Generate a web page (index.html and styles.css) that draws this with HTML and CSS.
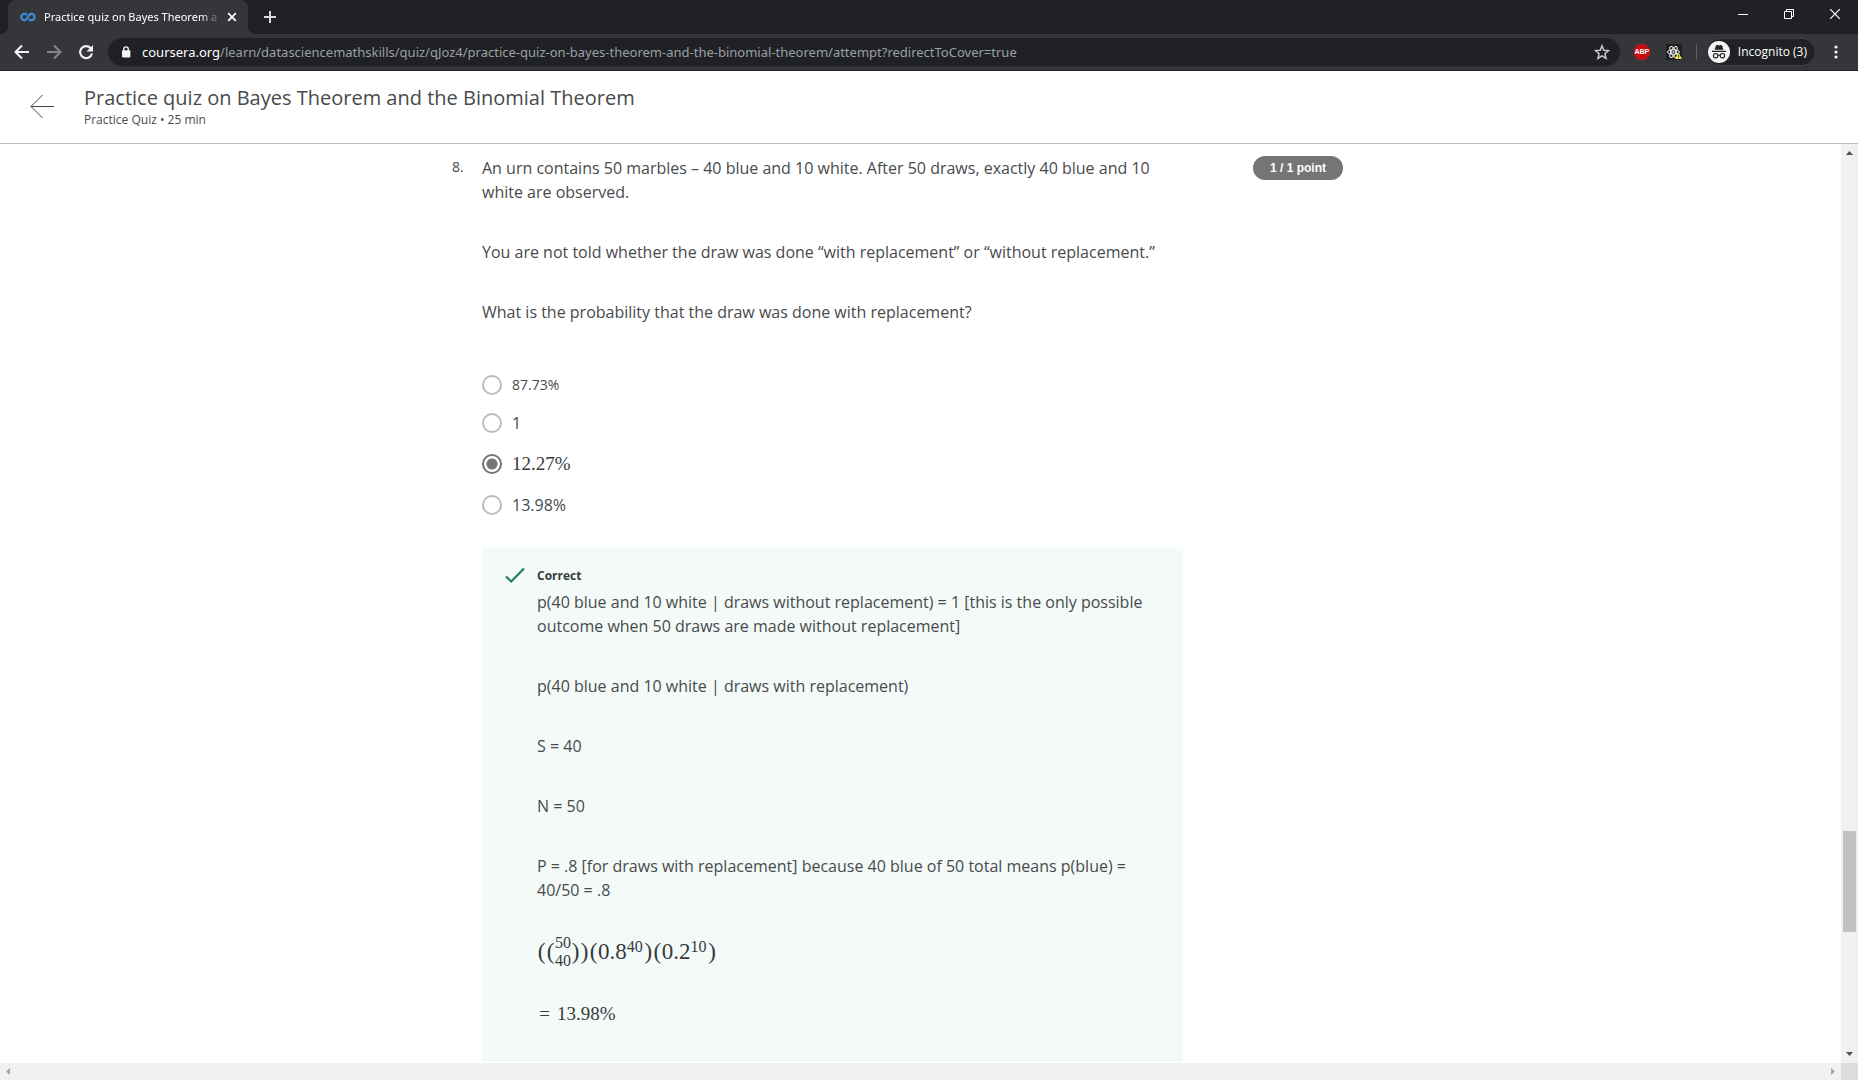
FILE: index.html
```html
<!DOCTYPE html>
<html lang="en">
<head>
<meta charset="utf-8">
<title>Practice quiz on Bayes Theorem and the Binomial Theorem</title>
<link rel="stylesheet" href="styles.css">
</head>
<body>
<div class="tabstrip">
  <div class="tab">
    <svg class="favicon" width="16" height="16" viewBox="0 0 16 16" fill="none" stroke="#3f86cc" stroke-width="2.400"><path d="M7.100 5.900C6.300 5 5.400 4.800 4.500 4.800a3.200 3.200 0 0 0 0 6.400C8 11.200 7.800 4.800 11.400 4.800a3.200 3.200 0 0 1 0 6.400c-.9 0-1.800-.4-2.500-1.200"/></svg>
    <span class="tab-title">Practice quiz on Bayes Theorem a</span>
    <button class="icon-button tab-close" aria-label="Close tab"><svg width="10" height="10" viewBox="0 0 10 10" stroke="#fff" stroke-width="1.800"><path d="M1.200 1.200l7.600 7.600M8.800 1.200L1.200 8.800"/></svg></button>
  </div>
  <button class="icon-button new-tab" aria-label="New tab"><svg width="12" height="12" viewBox="0 0 12 12" stroke="#d6d7d9" stroke-width="2"><path d="M6 0v12M0 6h12"/></svg></button>
  <div class="window-controls">
    <button class="icon-button" aria-label="Minimize"><svg width="10" height="10" viewBox="0 0 10 10" stroke="#fff"><path d="M0 5.500h10"/></svg></button>
    <button class="icon-button" aria-label="Restore"><svg width="10" height="10" viewBox="0 0 10 10" fill="none" stroke="#fff"><path d="M.5 2.500h7v7h-7zM2.500 2.500v-2h7v7h-2"/></svg></button>
    <button class="icon-button" aria-label="Close"><svg width="10" height="10" viewBox="0 0 10 10" stroke="#fff" stroke-width="1.200"><path d="M0 0l10 10M10 0L0 10"/></svg></button>
  </div>
</div>
<div class="toolbar">
  <div class="nav-buttons">
    <button class="icon-button" aria-label="Back"><svg width="16" height="16" viewBox="0 0 16 16" fill="none" stroke="#f1f3f4" stroke-width="2"><path d="M15 8H2.500M8 1.500L1.500 8 8 14.500"/></svg></button>
    <button class="icon-button" aria-label="Forward"><svg width="16" height="16" viewBox="0 0 16 16" fill="none" stroke="#85868a" stroke-width="2"><path d="M1 8h12.500M8 1.500L14.500 8 8 14.500"/></svg></button>
    <button class="icon-button" aria-label="Reload"><svg width="16" height="16" viewBox="0 0 16 16"><path d="M12.700 4.200A6 6 0 1 0 14 9.500" fill="none" stroke="#f1f3f4" stroke-width="2.100"/><path d="M15 1v6.500H8.500z" fill="#f1f3f4"/></svg></button>
  </div>
  <div class="omnibox">
    <svg width="10" height="12" viewBox="0 0 10 12"><path d="M2.700 5V3.200a2.300 2.300 0 0 1 4.600 0V5" fill="none" stroke="#f1f3f4" stroke-width="1.400"/><rect x="1" y="4.300" width="8.400" height="7.200" rx="1" fill="#f1f3f4"/></svg>
    <span class="url"><span class="domain">coursera.org</span>/learn/datasciencemathskills/quiz/qJoz4/practice-quiz-on-bayes-theorem-and-the-binomial-theorem/attempt?redirectToCover=true</span>
    <button class="icon-button" aria-label="Bookmark this page"><svg width="16" height="16" viewBox="0 0 16 16" fill="none" stroke="#c8c9cb" stroke-width="1.500"><path d="M8 1.800l1.800 4.400 4.700.4-3.600 3.100 1.100 4.600L8 11.800l-4 2.500 1.100-4.600-3.600-3.100 4.700-.4z"/></svg></button>
  </div>
  <div class="extensions">
    <button class="icon-button abp" aria-label="Adblock Plus">ABP</button>
    <button class="icon-button" aria-label="React developer tools"><svg width="16" height="16" viewBox="0 0 16 16"><path fill="#202020" d="M0 0h16v16H0z"/><g fill="none" stroke="#eee"><ellipse cx="7.500" cy="8" rx="6" ry="2.300"/><ellipse cx="7.500" cy="8" rx="6" ry="2.300" transform="rotate(60 7.500 8)"/><ellipse cx="7.500" cy="8" rx="6" ry="2.300" transform="rotate(120 7.500 8)"/></g><circle cx="7.500" cy="8" r="1" fill="#eee"/><path fill="#f5ea45" d="M12.500 8.500l3.500 6.500H9.200z"/><path stroke="#333" d="M12.600 11v2M12.600 13.600v.8"/></svg></button>
  </div>
  <div class="profile">
    <svg width="22" height="22" viewBox="0 0 22 22"><circle cx="11" cy="11" r="11" fill="#f1f3f4"/><path fill="#202124" d="M6.600 8.800L8 4.600q.4-.8 1.300-.5l1.700.5 1.700-.5q.9-.3 1.300.5l1.400 4.200zM4 9.800h14v1.200H4z"/><g fill="none" stroke="#202124" stroke-width="1.100"><circle cx="7.600" cy="14.700" r="2.200"/><circle cx="14.400" cy="14.700" r="2.200"/><path d="M9.800 14.400q1.200-.7 2.400 0"/></g></svg>
    <span>Incognito (3)</span>
  </div>
  <button class="icon-button menu" aria-label="Menu"><svg width="4" height="14" viewBox="0 0 4 14" fill="#f1f3f4"><circle cx="2" cy="2" r="1.600"/><circle cx="2" cy="7" r="1.600"/><circle cx="2" cy="12" r="1.600"/></svg></button>
</div>
<header class="quiz-header">
  <button class="icon-button" aria-label="Back to course"><svg width="24" height="24" viewBox="0 0 24 24" fill="none" stroke="#444"><path d="M24 11.500H1M12.500 0L1 11.500 12.500 23"/></svg></button>
  <div>
    <h1>Practice quiz on Bayes Theorem and the Binomial Theorem</h1>
    <p class="subtitle">Practice Quiz • 25 min</p>
  </div>
</header>
<div class="viewport">
  <main class="page">
    <section class="question">
      <div class="number">8.</div>
      <div class="body">
        <div class="prose">
          <p>An urn contains 50 marbles – 40 blue and 10 white. After 50 draws, exactly 40 blue and 10 white are observed.</p>
          <p>You are not told whether the draw was done “with replacement” or “without replacement.”</p>
          <p>What is the probability that the draw was done with replacement?</p>
        </div>
        <div class="options">
          <label class="option small"><input type="radio" name="answer"><span>87.73%</span></label>
          <label class="option"><input type="radio" name="answer"><span>1</span></label>
          <label class="option tall"><input type="radio" name="answer" checked><span class="math">12.27%</span></label>
          <label class="option"><input type="radio" name="answer"><span>13.98%</span></label>
        </div>
        <div class="feedback">
          <svg class="tick" width="20" height="18" viewBox="0 0 20 18" fill="none" stroke="#1f8354" stroke-width="2.200"><path d="M1 9.500l5.200 5L19 1.500"/></svg>
          <div>
            <h2>Correct</h2>
            <div class="prose">
              <p>p(40 blue and 10 white | draws without replacement) = 1 [this is the only possible outcome when 50 draws are made without replacement]</p>
              <p>p(40 blue and 10 white | draws with replacement)</p>
              <p>S = 40</p>
              <p>N = 50</p>
              <p>P = .8 [for draws with replacement] because 40 blue of 50 total means p(blue) = 40/50 = .8</p>
              <p class="formula"><span class="paren">(</span><span class="paren">(</span><span class="binom"><span>50</span><span>40</span></span><span class="paren">)</span><span class="paren">)</span><span class="paren">(</span>0.8<span class="power">40</span><span class="paren">)</span><span class="paren">(</span>0.2<span class="power">10</span><span class="paren">)</span></p>
              <p class="math result"><span class="equals">=</span><span>13.98%</span></p>
            </div>
          </div>
        </div>
      </div>
      <div class="points">1 / 1 point</div>
    </section>
  </main>
  <div class="scroll-y">
    <svg width="17" height="17" viewBox="0 0 17 17"><path fill="#505050" d="M5 11h7L8.500 7z"/></svg>
    <div class="before"></div><div class="thumb"></div><div class="after"></div>
    <svg width="17" height="17" viewBox="0 0 17 17"><path fill="#505050" d="M5 6h7L8.500 10z"/></svg>
  </div>
  <div class="scroll-x">
    <svg width="17" height="17" viewBox="0 0 17 17"><path fill="#a3a3a3" d="M10 5v7L6 8.500z"/></svg>
    <svg width="17" height="17" viewBox="0 0 17 17"><path fill="#a3a3a3" d="M7 5v7l4-3.500z"/></svg>
  </div>
  <div class="corner"></div>
</div>
</body>
</html>
```
FILE: styles.css
```css
* { box-sizing: border-box; }

body {
  margin: 0;
  height: 100vh;
  display: flex;
  flex-direction: column;
  overflow: hidden;
  background: #fff;
  color: #484a4c;
  font: 16px/24px "Open Sans", sans-serif;
}

h1, h2, p { margin: 0; }
svg { display: block; flex: none; }

.icon-button {
  display: flex;
  align-items: center;
  justify-content: center;
  flex: none;
  padding: 0;
  border: 0;
  background: none;
}

/* Browser window */
.tabstrip {
  display: flex;
  flex: none;
  height: 34px;
  padding-left: 8px;
  background: #202124;
}

.tab {
  position: relative;
  display: flex;
  align-items: center;
  width: 240px;
  padding: 0 11px 0 12px;
  border-radius: 8px 8px 0 0;
  background: #35363a;
  color: #fff;
  font: 11px/24px "Noto Sans", sans-serif;
}

.tab::before, .tab::after {
  content: "";
  position: absolute;
  bottom: 0;
  width: 8px;
  height: 8px;
}
.tab::before { left: -8px; background: radial-gradient(circle at 0 0, #202124 8px, #35363a 8px); }
.tab::after { right: -8px; background: radial-gradient(circle at 100% 0, #202124 8px, #35363a 8px); }

.tab-title {
  flex: 1;
  margin-left: 8px;
  white-space: nowrap;
  -webkit-mask-image: linear-gradient(to left, transparent, #000 20px);
  mask-image: linear-gradient(to left, transparent, #000 20px);
}
.tab-close { margin-left: 6px; }
.new-tab { width: 44px; }
.window-controls { display: flex; margin-left: auto; height: 28px; }
.window-controls .icon-button { width: 46px; }

.toolbar {
  display: flex;
  align-items: center;
  flex: none;
  height: 37px;
  padding: 0 14px;
  border-bottom: 1px solid #242327;
  background: #35363a;
  color: #fff;
  font-size: 12px;
}
.nav-buttons { display: flex; gap: 16px; margin-right: 14px; }

.omnibox {
  display: flex;
  align-items: center;
  flex: 1;
  min-width: 0;
  height: 28px;
  padding: 0 10px 0 13px;
  border-radius: 14px;
  background: #202124;
}
.url {
  flex: 1;
  overflow: hidden;
  margin-left: 11px;
  white-space: nowrap;
  color: #9aa0a6;
  font: 13px/24px "Noto Sans", sans-serif;
}
.domain { color: #fff; }

.extensions {
  display: flex;
  gap: 16px;
  margin: 0 9px 0 14px;
  padding-right: 14px;
  border-right: 1px solid #606165;
}
.abp {
  width: 16px;
  height: 16px;
  background: #c70d12;
  clip-path: polygon(30% 0, 70% 0, 100% 30%, 100% 70%, 70% 100%, 30% 100%, 0 70%, 0 30%);
  color: #fff;
  font: bold 7px/16px "Liberation Sans", sans-serif;
}
.profile {
  display: flex;
  align-items: center;
  gap: 8px;
  height: 28px;
  padding: 0 8px 0 1px;
  border: 1px solid #3f4044;
  border-radius: 14px;
  background: #202124;
}
.menu { width: 16px; margin-left: 12px; }

/* Quiz page */
.quiz-header {
  display: flex;
  align-items: center;
  flex: none;
  gap: 30px;
  height: 73px;
  padding: 0 30px;
  border-bottom: 1px solid #bdbdbd;
}
h1 { font-size: 20px; line-height: 26px; font-weight: 400; }
.subtitle { font-size: 12px; line-height: 18px; }

.viewport {
  display: grid;
  grid-template: minmax(0, 1fr) 17px / minmax(0, 1fr) 17px;
  flex: 1;
  min-height: 0;
}
.page { overflow: hidden; padding-top: 12px; }

.question {
  display: flex;
  align-items: flex-start;
  max-width: 937px;
  margin: 0 auto;
}
.number { width: 30px; font-size: 14px; line-height: 22px; }
.body { flex: 0 1 701px; }
.prose { display: grid; gap: 36px; }

.points {
  margin-left: 70px;
  padding: 0 17px;
  border-radius: 12px;
  background: #757575;
  color: #fff;
  font: bold 12px/24px "Liberation Sans", sans-serif;
  white-space: nowrap;
}

.options { margin: 42px 0 24px; }
.option { display: flex; align-items: center; gap: 10px; height: 38px; }
.option.small { font-size: 14px; }
.option.tall { height: 44px; }
.option input {
  appearance: none;
  width: 20px;
  height: 20px;
  margin: 0;
  border: 2px solid #bdbdbd;
  border-radius: 50%;
}
.option input:checked {
  border-color: #757575;
  background: radial-gradient(circle, #757575 5px, transparent 6px);
}

.feedback {
  display: flex;
  align-items: flex-start;
  gap: 12px;
  padding: 19px 30px 36px 23px;
  background: #f3faf8;
}
h2 { margin-bottom: 5px; color: #373a3c; font-size: 12px; line-height: 18px; font-weight: 700; }

.math, .formula { color: #373a3c; font-family: "Liberation Serif", serif; }
.math { font-size: 19px; }
.result { display: flex; gap: 5px; }
.equals { width: 15px; text-align: center; }
.formula {
  display: flex;
  align-items: center;
  height: 28px;
  font-size: 23px;
  line-height: 28px;
}
.paren { width: 9px; text-align: center; }
.binom {
  display: grid;
  font-size: 16px;
  line-height: 18px;
}
.power { align-self: flex-start; margin-right: 1px; font-size: 16px; line-height: 18px; }

/* Scroll bars */
.scroll-y { display: flex; flex-direction: column; background: #f1f1f1; }
.before { flex: 670; }
.thumb { flex: 101; margin: 0 2px; background: #c1c1c1; }
.after { flex: 114; }
.scroll-x { display: flex; justify-content: space-between; background: #f1f1f1; }
.corner { background: #dcdcdc; }
```
